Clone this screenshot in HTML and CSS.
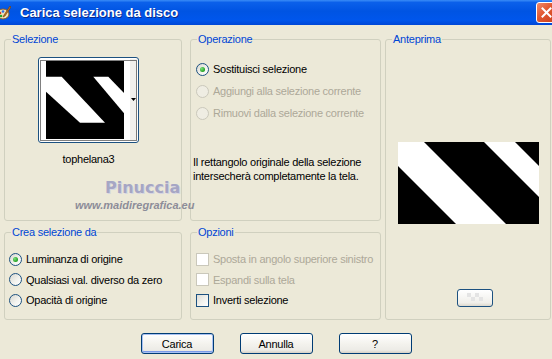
FILE: index.html
```html
<!DOCTYPE html>
<html lang="it">
<head>
    <meta charset="UTF-8">
    <meta name="viewport" content="width=device-width, initial-scale=1.0">
    <title>Carica selezione da disco</title>
    <link rel="stylesheet" href="styles.css">
</head>
<body>
    <div class="window">
        <div class="titlebar">
            <svg class="app-icon" width="14" height="16" viewBox="0 0 14 16">
                <ellipse cx="6" cy="9" rx="6" ry="5" fill="#f2e2b6" stroke="#8a5a24" stroke-width="1"/>
                <circle cx="3" cy="8" r="1.3" fill="#d83a1e"/>
                <circle cx="6" cy="6.5" r="1.3" fill="#2d6fe0"/>
                <circle cx="4" cy="11" r="1.3" fill="#2aa52a"/>
                <path d="M13 1 L7 10 L6 12 L8 11 L14 2 Z" fill="#c8781c" stroke="#6b3a0c" stroke-width="0.6"/>
            </svg>
            <span class="title">Carica selezione da disco</span>
            <span class="close-btn">
                <svg width="11" height="11" viewBox="0 0 11 11">
                    <path d="M1.5 1.5 L9.5 9.5 M9.5 1.5 L1.5 9.5" stroke="#fff" stroke-width="2" stroke-linecap="square"/>
                </svg>
            </span>
        </div>

        <div class="dialog">
            <div class="groups">
                <fieldset class="group group-selection">
                    <legend>Selezione</legend>
                    <div class="sel-body">
                        <button type="button" class="thumb">
                            <svg width="99" height="84" viewBox="0 0 99 84">
                                <rect x="7" y="3" width="78" height="78" fill="#000"/>
                                <rect x="91" y="1" width="7" height="81" fill="#f1f0ec"/>
                                <polygon points="7,18.7 22.7,18.7 66,64.7 41,64.7 7,33.7" fill="#fff"/>
                                <polygon points="54.3,18.7 69.3,18.7 85,35 85,55.3" fill="#fff"/>
                                <polygon points="92,40 97,40 94.5,43" fill="#000"/>
                                <rect x="1.5" y="2.5" width="96" height="80" fill="none" stroke="#000" stroke-width="1" stroke-dasharray="1 1"/>
                            </svg>
                        </button>
                        <div class="thumb-name">tophelana3</div>
                    </div>
                </fieldset>

                <fieldset class="group group-operation">
                    <legend>Operazione</legend>
                    <div class="op-body">
                        <div class="opt-row"><span class="radio checked"></span><span>Sostituisci selezione</span></div>
                        <div class="opt-row disabled"><span class="radio"></span><span>Aggiungi alla selezione corrente</span></div>
                        <div class="opt-row disabled"><span class="radio"></span><span>Rimuovi dalla selezione corrente</span></div>
                        <p class="op-note">Il rettangolo originale della selezione<br>intersecherà completamente la tela.</p>
                    </div>
                </fieldset>

                <fieldset class="group group-preview">
                    <legend>Anteprima</legend>
                    <div class="pv-body">
                        <svg class="pv-image" width="141" height="82" viewBox="0 0 141 82">
                            <rect width="141" height="82" fill="#000"/>
                            <polygon points="0,0 26,0 108,82 58,82 0,24" fill="#fff"/>
                            <polygon points="86,0 117,0 141,24 141,55" fill="#fff"/>
                        </svg>
                        <button type="button" class="pv-btn">
                            <svg width="16" height="10" viewBox="0 0 16 10">
                                <rect x="0" y="0" width="4" height="4" fill="#e4e4e4"/>
                                <rect x="8" y="0" width="4" height="4" fill="#e4e4e4"/>
                                <rect x="4" y="4" width="4" height="4" fill="#e4e4e4"/>
                                <rect x="12" y="4" width="4" height="4" fill="#e4e4e4"/>
                            </svg>
                        </button>
                    </div>
                </fieldset>

                <fieldset class="group group-source">
                    <legend>Crea selezione da</legend>
                    <div class="src-body">
                        <div class="opt-row"><span class="radio checked"></span><span>Luminanza di origine</span></div>
                        <div class="opt-row"><span class="radio"></span><span>Qualsiasi val. diverso da zero</span></div>
                        <div class="opt-row"><span class="radio"></span><span>Opacità di origine</span></div>
                    </div>
                </fieldset>

                <fieldset class="group group-options">
                    <legend>Opzioni</legend>
                    <div class="opts-body">
                        <div class="opt-row disabled"><span class="check"></span><span>Sposta in angolo superiore sinistro</span></div>
                        <div class="opt-row disabled"><span class="check"></span><span>Espandi sulla tela</span></div>
                        <div class="opt-row"><span class="check"></span><span>Inverti selezione</span></div>
                    </div>
                </fieldset>
            </div>

            <div class="actions">
                <button type="button" class="btn default">Carica</button>
                <button type="button" class="btn">Annulla</button>
                <button type="button" class="btn">?</button>
            </div>

            <div class="watermark">
                <span class="wm-name">Pinuccia</span>
                <span class="wm-url">www.maidiregrafica.eu</span>
            </div>
        </div>
    </div>
</body>
</html>
```

FILE: styles.css
```css
body {
    margin: 0;
    background: #ece9d8;
    font-family: "Liberation Sans", Arial, sans-serif;
    font-size: 11px;
    letter-spacing: -0.25px;
    color: #000;
}
.window {
    width: 552px;
    height: 359px;
    overflow: hidden;
    display: flex;
    flex-direction: column;
}

/* title bar */
.titlebar {
    flex: none;
    height: 25px;
    display: flex;
    align-items: center;
    background: linear-gradient(to bottom, #3a8cf7 0%, #0b60ea 10%, #0054e3 45%, #0056ec 80%, #0047d6 100%);
    color: #fff;
}
.app-icon {
    margin-left: -3px;
    flex: none;
}
.title {
    margin-left: 9px;
    font-weight: bold;
    font-size: 13px;
    letter-spacing: 0;
    text-shadow: 1px 1px 0 #0b2a8a;
}
.close-btn {
    margin-left: auto;
    margin-right: -5px;
    width: 21px;
    height: 21px;
    box-sizing: border-box;
    border: 1px solid #fff;
    border-radius: 3px;
    background: linear-gradient(135deg, #f08a6c 0%, #e1572f 45%, #c9401c 100%);
    display: flex;
    align-items: center;
    justify-content: center;
}

/* dialog body */
.dialog {
    flex: 1;
    position: relative;
    padding: 8px 0 0 4px;
}
.groups {
    display: grid;
    grid-template-columns: 178px 199px 170px;
    grid-template-rows: 188px 94px;
    row-gap: 5px;
}
.group {
    margin: 0;
    padding: 0;
    min-width: 0;
    border: 1px solid #d0d0bf;
    border-radius: 3px;
}
.group legend {
    margin-left: 6px;
    padding: 0 1px;
    line-height: 13px;
    color: #0046d5;
}
.group-operation,
.group-options {
    margin-left: 8px;
}
.group-preview {
    grid-column: 3;
    grid-row: 1 / span 2;
    margin-left: 4px;
}

/* Selezione */
.sel-body {
    display: flex;
    flex-direction: column;
    align-items: center;
    padding: 11px 9px 0 0;
}
.thumb {
    width: 101px;
    height: 86px;
    padding: 0;
    border: 1px solid #1c5180;
    border-radius: 3px;
    background: #fff;
}
.thumb svg {
    display: block;
}
.thumb-name {
    margin-top: 10px;
    line-height: 13px;
}

/* rows of radios / checks */
.opt-row {
    display: flex;
    align-items: center;
    gap: 4px;
    height: 22px;
    white-space: nowrap;
}
.opt-row.disabled {
    color: #aca899;
}
.radio {
    flex: none;
    width: 13px;
    height: 13px;
    box-sizing: border-box;
    border: 1px solid #1c5180;
    border-radius: 50%;
    background: linear-gradient(135deg, #d8d7d0 0%, #f4f4f0 60%, #fff 100%);
    display: flex;
    align-items: center;
    justify-content: center;
}
.radio.checked::after {
    content: "";
    width: 5px;
    height: 5px;
    border-radius: 50%;
    background: radial-gradient(circle at 35% 35%, #7de07d 0%, #21a121 70%, #1a8a1a 100%);
}
.disabled .radio {
    border-color: #cac8bb;
    background: #efede3;
}
.check {
    flex: none;
    width: 13px;
    height: 13px;
    box-sizing: border-box;
    border: 1px solid #1c5180;
    background: linear-gradient(135deg, #dcdcd7 0%, #f2f2ee 55%, #fff 100%);
}
.disabled .check {
    border-color: #cac8bb;
    background: #fff;
}

/* Operazione */
.op-body {
    padding: 12px 0 0 5px;
}
.op-note {
    margin: 31px 0 0 -3px;
    line-height: 14px;
}

/* Crea selezione da / Opzioni */
.src-body {
    padding: 10px 0 0 4px;
}
.opts-body {
    padding: 10px 0 0 5px;
}
.src-body .opt-row,
.opts-body .opt-row {
    height: 20.5px;
}

/* Anteprima */
.pv-body {
    display: flex;
    flex-direction: column;
    align-items: center;
    padding-top: 96px;
}
.pv-image {
    display: block;
}
.pv-btn {
    margin-top: 65px;
    margin-left: 14px;
    width: 36px;
    height: 18px;
    padding: 0;
    border: 1px solid #1c5180;
    border-radius: 3px;
    background: linear-gradient(#fff, #f0efea 80%, #dcd8cc);
    display: flex;
    align-items: center;
    justify-content: center;
}

/* bottom buttons */
.actions {
    display: flex;
    justify-content: center;
    gap: 26px;
    margin: 13px 0 0 -4px;
}
.btn {
    width: 73px;
    height: 21px;
    padding: 0;
    border: 1px solid #003c74;
    border-radius: 3px;
    background: linear-gradient(#fff 0%, #f4f3ee 50%, #ecebe6 85%, #d6d0c5 100%);
    font-family: "Liberation Sans", Arial, sans-serif;
    font-size: 11px;
    letter-spacing: -0.25px;
    color: #000;
}
.btn.default {
    box-shadow: inset 0 0 0 1px #a8c1f2, inset 0 -2px 0 0 #7a9ae8;
}

/* watermark over the dialog */
.watermark {
    position: absolute;
    left: 75px;
    top: 152px;
    width: 124px;
    display: flex;
    flex-direction: column;
}
.wm-name {
    margin-left: 30px;
    font-family: "DejaVu Sans", sans-serif;
    font-weight: bold;
    font-size: 16px;
    line-height: 22px;
    letter-spacing: 0;
    color: #a6a6c4;
    text-shadow: 1px 1px 0 #d6d6e2;
}
.wm-url {
    font-weight: bold;
    font-style: italic;
    font-size: 11px;
    line-height: 13px;
    letter-spacing: 0;
    color: #8d8d99;
}
```
